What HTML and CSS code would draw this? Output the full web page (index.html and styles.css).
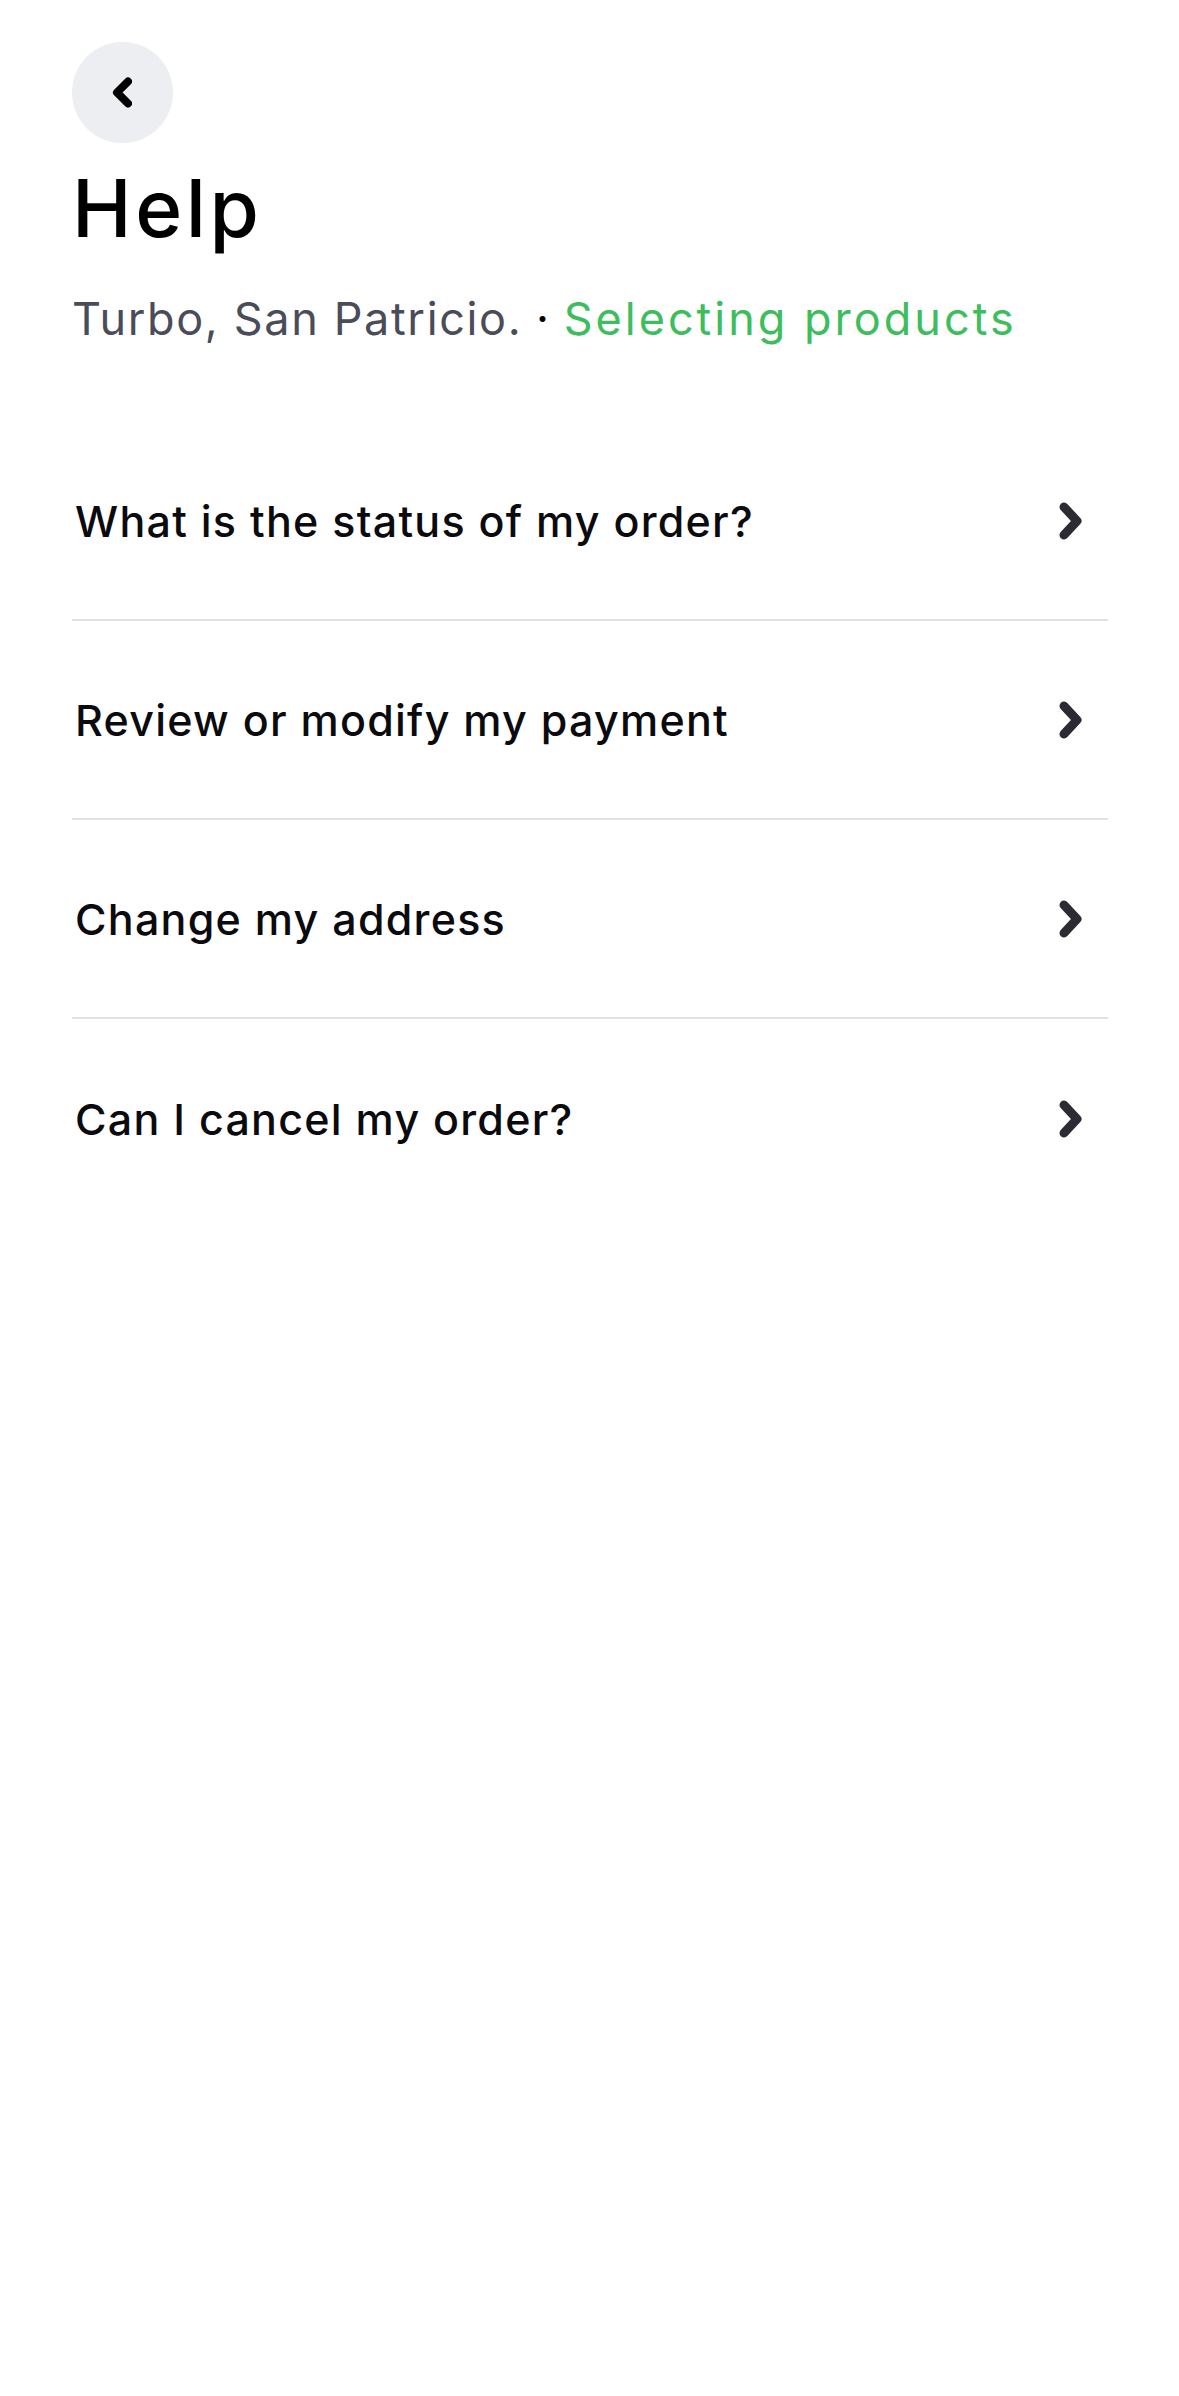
FILE: index.html
```html
<!DOCTYPE html>
<html lang="en">
<head>
<meta charset="utf-8">
<title>Help</title>
<link rel="stylesheet" href="styles.css">
</head>
<body>
<main class="page">
  <button class="back" aria-label="Back">
    <svg width="20" height="31" viewBox="0 0 20 31"><path d="M16 4.5 L5 15.5 L16 26.5" fill="none" stroke="#000" stroke-width="8" stroke-linecap="round" stroke-linejoin="round"/></svg>
  </button>
  <h1 class="title">Help</h1>
  <p class="subtitle"><span class="place">Turbo, San Patricio.</span> <span class="dot">·</span> <span class="status">Selecting products</span></p>
  <ul class="list">
    <li class="row"><span class="label">What is the status of my order?</span><svg class="chev" width="24" height="38" viewBox="0 0 24 38"><path d="M5 5 L18 19 L5 33" fill="none" stroke="#2b2b33" stroke-width="9" stroke-linecap="round" stroke-linejoin="round"/></svg></li>
    <li class="row"><span class="label">Review or modify my payment</span><svg class="chev" width="24" height="38" viewBox="0 0 24 38"><path d="M5 5 L18 19 L5 33" fill="none" stroke="#2b2b33" stroke-width="9" stroke-linecap="round" stroke-linejoin="round"/></svg></li>
    <li class="row"><span class="label">Change my address</span><svg class="chev" width="24" height="38" viewBox="0 0 24 38"><path d="M5 5 L18 19 L5 33" fill="none" stroke="#2b2b33" stroke-width="9" stroke-linecap="round" stroke-linejoin="round"/></svg></li>
    <li class="row"><span class="label">Can I cancel my order?</span><svg class="chev" width="24" height="38" viewBox="0 0 24 38"><path d="M5 5 L18 19 L5 33" fill="none" stroke="#2b2b33" stroke-width="9" stroke-linecap="round" stroke-linejoin="round"/></svg></li>
  </ul>
</main>
</body>
</html>
```

FILE: styles.css
```css
* { box-sizing: border-box; }
html, body { margin: 0; padding: 0; background: #fff; }
body { font-family: Inter, "Noto Sans", sans-serif; color: #000; }
.page { padding: 42px 71px 0 72px; }
.back {
  width: 101px; height: 101px; border-radius: 50%;
  background: #eceef1; border: 0; padding: 0;
  display: flex; align-items: center; justify-content: center;
}
.back svg { display: block; margin-left: -2px; }
.title {
  margin: 17px 0 0 0;
  font-size: 80px; line-height: 96px; font-weight: 500;
  letter-spacing: 3.6px;
}
.subtitle {
  margin: 36px 0 0 0;
  font-size: 45px; line-height: 54px; font-weight: 400;
  letter-spacing: 1px;
  color: #4a4d59;
}
.subtitle .place { letter-spacing: 1.65px; }
.subtitle .dot { color: #000; }
.subtitle .status { color: #3dbd5d; letter-spacing: 3px; }
.list { list-style: none; margin: 76px 0 0 0; padding: 0; }
.row {
  height: 199px;
  display: flex; align-items: center; justify-content: space-between;
  border-bottom: 2px solid #e1e1e1;
  padding-right: 25px;
}
.row:last-child { border-bottom: 0; }
.label { font-size: 43px; font-weight: 500; color: #0b0b0f; padding-left: 3px; letter-spacing: 1.25px; }
.chev { display: block; flex: none; }
```
